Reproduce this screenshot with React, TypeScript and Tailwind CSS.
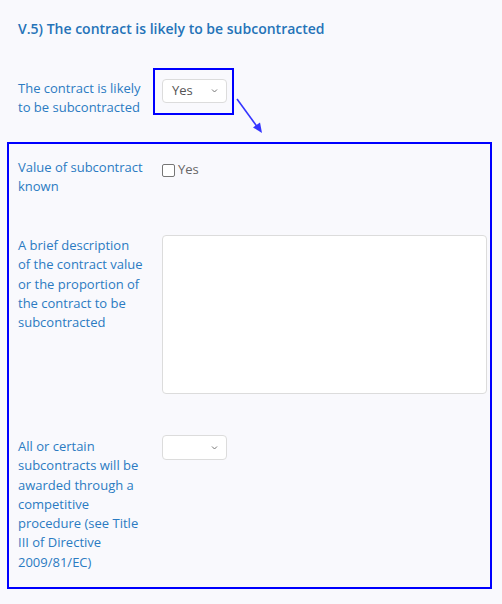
import React from "react";

function Chevron() {
  return (
    <svg width="7" height="5" viewBox="0 0 7 5" className="absolute right-[8px] top-1/2 -translate-y-1/2">
      <path d="M1 1 L3.5 3.5 L6 1" fill="none" stroke="#777" strokeWidth="1" />
    </svg>
  );
}

function Select({ value, h }: { value?: string; h: string }) {
  return (
    <div className={`relative w-[65px] ${h} bg-white border border-[#dcdcdc] rounded-[4px] flex items-center pl-[9px] text-[13px] text-[#555]`}>
      {value}
      <Chevron />
    </div>
  );
}

export default function App() {
  const label = "text-[13px] leading-[19.3px] text-[#2b7bc2] whitespace-nowrap";
  return (
    <div
      className="relative min-h-screen w-[502px] bg-[#f9f9fd] pt-[19px]"
      style={{ fontFamily: '"Open Sans", "Noto Sans", sans-serif' }}
    >
      <h2 className="pl-[18px] text-[14px] leading-[20px] font-semibold text-[#2573b8]">
        V.5) The contract is likely to be subcontracted
      </h2>

      <div className="flex items-start h-[47px] mt-[29px] pl-[18px]">
        <div className={`${label} w-[135px] mt-[11px]`}>
          The contract is likely
          <br />
          to be subcontracted
        </div>
        <div className="border-2 border-[#0000ff] pl-[7px] pr-[5px] pt-[9px] pb-[10px]">
          <Select value="Yes" h="h-[24px]" />
        </div>
      </div>

      <svg className="absolute left-[234px] top-[96px]" width="32" height="42" viewBox="0 0 32 42">
        <line x1="3" y1="3" x2="24" y2="32" stroke="#3535ff" strokeWidth="1.6" />
        <polygon points="28,37 19,31.5 26,26.5" fill="#3535ff" />
      </svg>

      <div className="mt-[27px] ml-[7px] w-[485px] h-[447px] border-2 border-[#0000ff] pl-[9px] pr-[3px]">
        <div className="flex mt-[14px] h-[39px]">
          <div className={`${label} w-[144px]`}>
            Value of subcontract
            <br />
            known
          </div>
          <div className="flex items-center mt-[5px] h-[14px]">
            <span className="w-[13px] h-[13px] border border-[#767676] rounded-[2px] bg-white" />
            <span className="ml-[3px] text-[13px] text-[#666]">Yes</span>
          </div>
        </div>

        <div className="flex mt-[38px]">
          <div className={`${label} w-[144px] mt-[1px]`}>
            A brief description
            <br />
            of the contract value
            <br />
            or the proportion of
            <br />
            the contract to be
            <br />
            subcontracted
          </div>
          <div className="w-[325px] h-[159px] bg-white border border-[#dcdcdc] rounded-[4px]" />
        </div>

        <div className="flex mt-[41px]">
          <div className={`${label} w-[144px] mt-[2px]`}>
            All or certain
            <br />
            subcontracts will be
            <br />
            awarded through a
            <br />
            competitive
            <br />
            procedure (see Title
            <br />
            III of Directive
            <br />
            2009/81/EC)
          </div>
          <Select h="h-[25px]" />
        </div>
      </div>
    </div>
  );
}
